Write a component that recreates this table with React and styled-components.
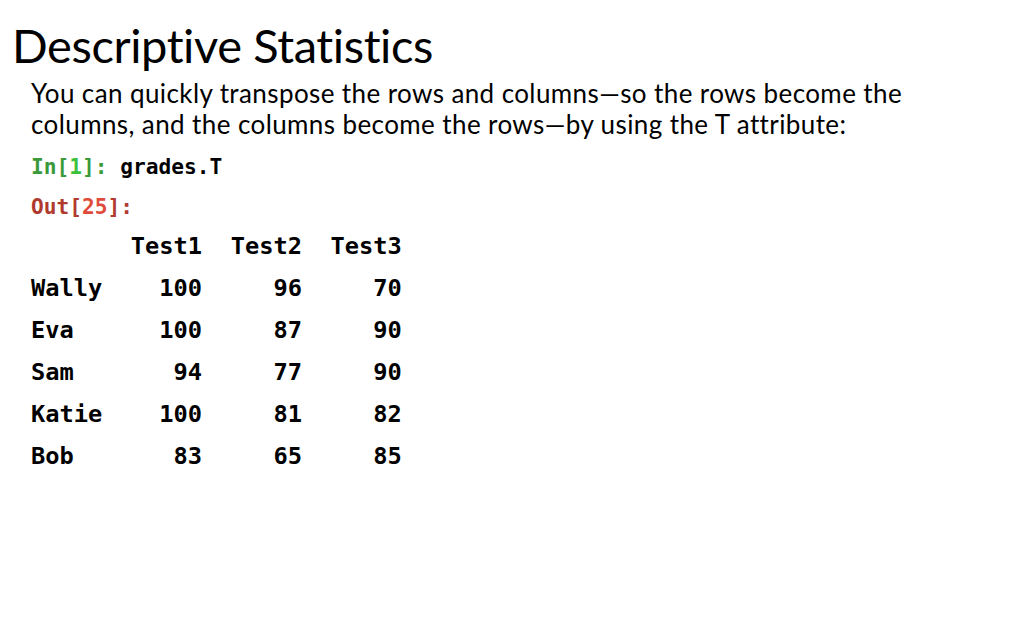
import React from "react";
import styled, { createGlobalStyle } from "styled-components";

const Global = createGlobalStyle`
  html, body { margin: 0; padding: 0; background: #fff; }
  body { width: 1024px; height: 640px; overflow: hidden; }
`;

const Slide = styled.div`
  width: 1024px;
  height: 640px;
  box-sizing: border-box;
  padding: 18px 0 0 12px;
  background: #fff;
  color: #000;
`;

const Title = styled.h1`
  margin: 0;
  font-family: Lato, "Open Sans", sans-serif;
  font-weight: 400;
  font-size: 47px;
  line-height: 54px;
  letter-spacing: -0.4px;
`;

const Body = styled.div`
  padding-left: 19px;
`;

const Para = styled.p`
  margin: 6px 0 0;
  font-family: Lato, "Open Sans", sans-serif;
  font-size: 26px;
  line-height: 31px;
  letter-spacing: 0.4px;
  white-space: nowrap;
`;

const CodeLine = styled.div`
  font-family: "DejaVu Sans Mono", monospace;
  font-weight: 700;
  font-size: 21.2px;
  line-height: 40px;
  white-space: pre;
  margin-top: ${(p) => p.$mt || 0}px;
`;

const Prompt = styled.span`
  color: ${(p) => p.$color};
`;

const Num = styled.span`
  color: ${(p) => p.$color};
`;

const Table = styled.div`
  font-family: "DejaVu Sans Mono", monospace;
  font-weight: 700;
  font-size: 23.7px;
  line-height: 42px;
  white-space: pre;
  margin-top: -2px;
`;

const Row = styled.div``;

const rows = [
  ["Wally", 100, 96, 70],
  ["Eva", 100, 87, 90],
  ["Sam", 94, 77, 90],
  ["Katie", 100, 81, 82],
  ["Bob", 83, 65, 85],
];

const pad = (s, n) => String(s).padStart(n, " ");

export default function App() {
  return (
    <>
      <Global />
      <Slide>
        <Title>Descriptive Statistics</Title>
        <Body>
          <Para>
            You can quickly transpose the rows and columns—so the rows become the
            <br />
            columns, and the columns become the rows—by using the T attribute:
          </Para>
          <CodeLine $mt={7}>
            <Prompt $color="#3a9a3a">In[</Prompt>
            <Num $color="#3cc13c">1</Num>
            <Prompt $color="#3a9a3a">]: </Prompt>
            grades.T
          </CodeLine>
          <CodeLine>
            <Prompt $color="#b03a2e">Out[</Prompt>
            <Num $color="#e04a3a">25</Num>
            <Prompt $color="#b03a2e">]:</Prompt>
          </CodeLine>
          <Table>
            <Row>{"       Test1  Test2  Test3"}</Row>
            {rows.map(([n, a, b, c]) => (
              <Row key={n}>{n.padEnd(7, " ") + pad(a, 5) + pad(b, 7) + pad(c, 7)}</Row>
            ))}
          </Table>
        </Body>
      </Slide>
    </>
  );
}
